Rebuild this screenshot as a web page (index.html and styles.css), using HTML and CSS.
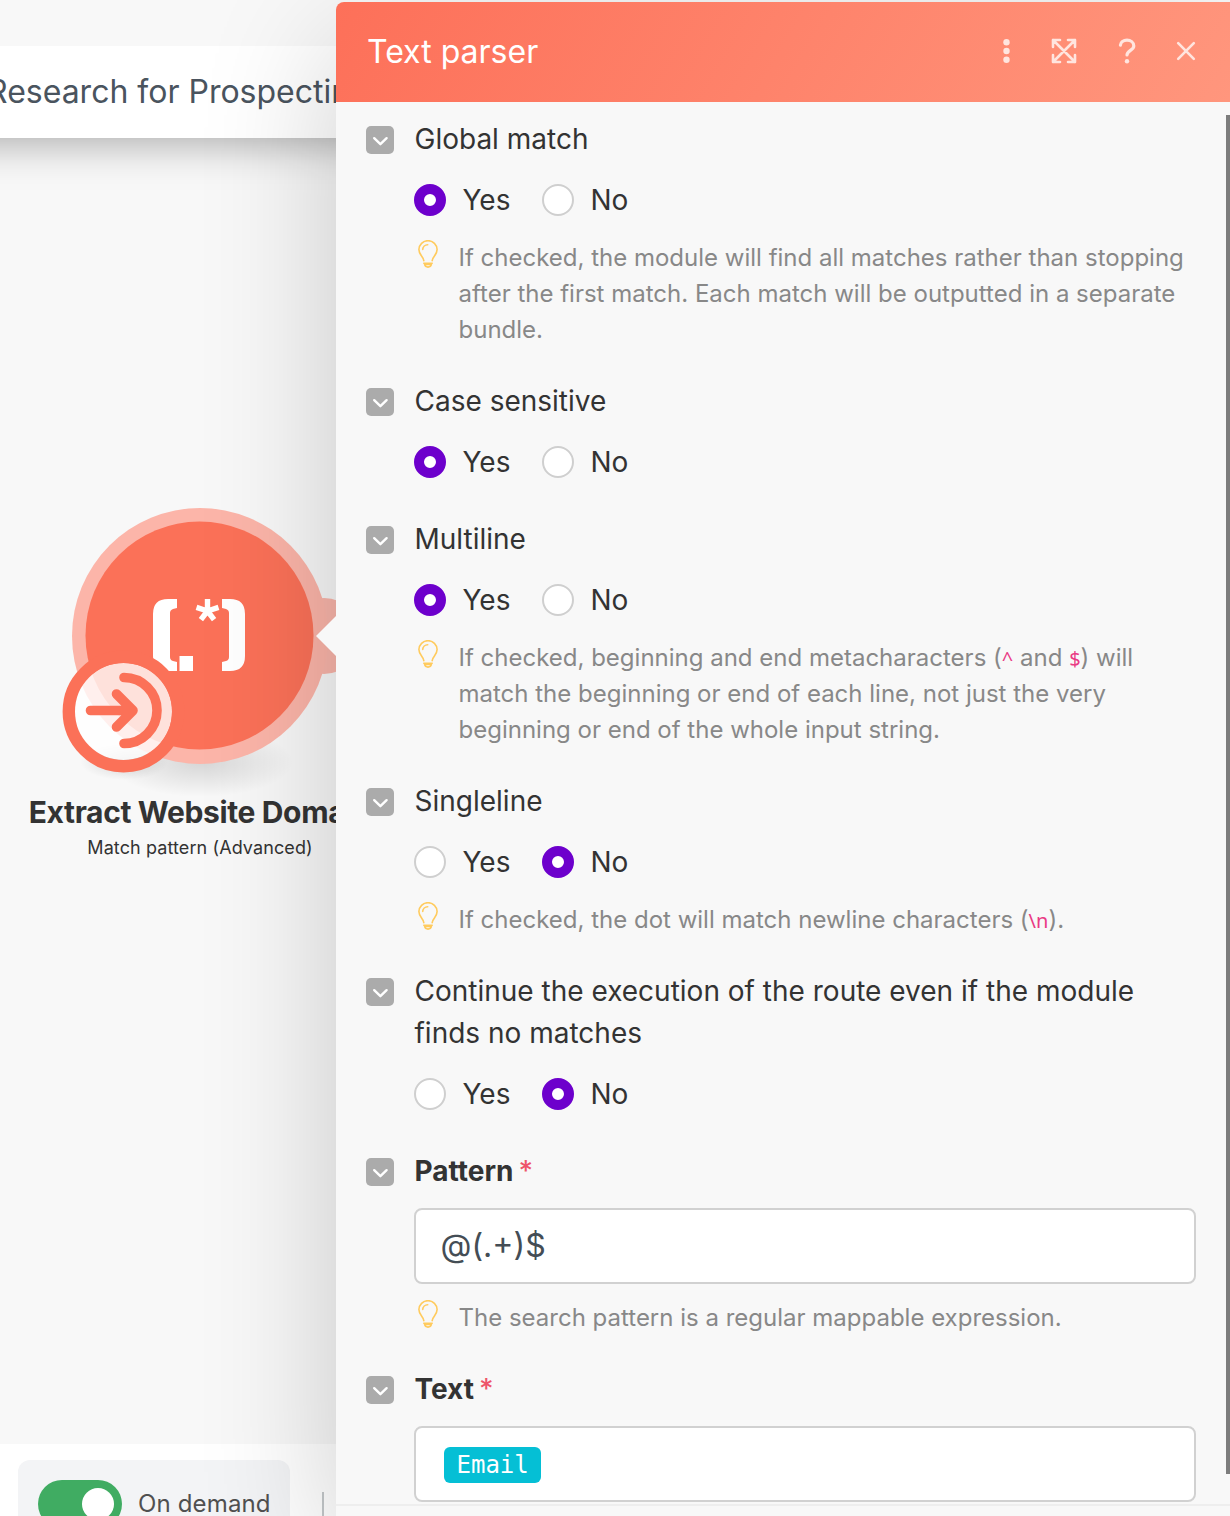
FILE: index.html
```html
<!DOCTYPE html>
<html lang="en">
<head>
    <meta charset="UTF-8">
    <title>Text parser</title>
    <link rel="stylesheet" href="styles.css">
</head>
<body>
    <!-- Shared icons -->
    <svg class="sprite">
        <symbol id="chevron" viewBox="0 0 28 28">
            <path d="M8.2 12.2l6.2 6 6.200-6" fill="none" stroke="#fff" stroke-width="2.4" stroke-linecap="round" stroke-linejoin="round"/>
        </symbol>
        <symbol id="bulb" viewBox="0 0 20 28">
            <g fill="none" stroke="#ffcb5e" stroke-width="1.6" stroke-linecap="round" stroke-linejoin="round">
                <path d="M5.800 20.600C5.300 16.600 0.900 14.800 0.900 9.600a9.100 8.900 0 0 1 18.200 0C19.100 14.800 14.700 16.600 14.200 20.600"/>
                <path d="M4.700 9.400a5 5 0 0 1 5-4.600"/>
                <path d="M5.800 23.200h8.400M6.600 24.400c.4 1.800 1.200 2.700 3.400 2.700s3-.9 3.400-2.700z"/>
            </g>
        </symbol>
    </svg>

    <div class="editor">
        <header class="topbar">
            <span class="scenario-name">Research for Prospecting</span>
        </header>

        <main class="canvas">
            <div class="module">
                <svg class="module-icon" width="340" height="310" viewBox="0 490 340 310">
                    <defs>
                        <radialGradient id="ground">
                            <stop offset="0" stop-color="#000" stop-opacity=".14"/>
                            <stop offset=".5" stop-color="#000" stop-opacity=".07"/>
                            <stop offset="1" stop-color="#000" stop-opacity="0"/>
                        </radialGradient>
                    </defs>
                    <ellipse cx="201" cy="762" rx="92" ry="35" fill="url(#ground)"/>
                    <ellipse cx="124" cy="762" rx="44" ry="18" fill="url(#ground)"/>
                    <circle cx="324" cy="636" r="38" fill="#fab6ab"/>
                    <circle cx="200" cy="636" r="128" fill="#fcb5a9"/>
                    <circle cx="199.500" cy="635.500" r="114" fill="#fb7158"/>
                    <!-- regex logo -->
                    <g fill="#fff">
                        <path d="M177 599v9l-4 1q-3 1-3 4v44q0 3 3 4l4 1v9h-9q-15 0-15-15v-42q0-15 15-15z"/>
                        <path d="M222 599v9l4 1q3 1 3 4v44q0 3-3 4l-4 1v9h8q15 0 15-15v-42q0-15-15-15z"/>
                        <path d="M179.500 656h13.500v15h-13.500z"/>
                    </g>
                    <path d="M207.500 611v-12M207.500 611l11-3.600M207.500 611l6.600 8.700M207.500 611l-6.600 8.700M207.500 611l-11-3.600" stroke="#fff" stroke-width="5.400"/>
                    <!-- trigger badge -->
                    <circle cx="123.500" cy="711.500" r="48.500" fill="#fff" fill-opacity=".79"/>
                    <circle cx="123.500" cy="711.500" r="54.700" fill="none" stroke="#fb7158" stroke-width="12.400"/>
                    <g fill="none" stroke="#fb7158" stroke-width="9.600" stroke-linecap="round" stroke-linejoin="round">
                        <path d="M90.500 710.500h42M116.500 694l16.500 16.500-16.500 16.500"/>
                        <path d="M124 677.500a33 33 0 0 1 0 66"/>
                    </g>
                </svg>
                <div class="module-name">Extract Website Domain</div>
                <div class="module-type">Match pattern (Advanced)</div>
            </div>
        </main>

        <footer class="bottombar">
            <div class="schedule">
                <span class="switch"></span>
                <span>On demand</span>
            </div>
            <span class="divider"></span>
        </footer>
    </div>

    <section class="panel">
        <header class="panel-header">
            <h1>Text parser</h1>
            <div class="panel-actions">
                <svg width="8" height="26" viewBox="0 0 8 26" fill="#ffe5df">
                    <circle cx="3.500" cy="4.200" r="3.200"/>
                    <circle cx="3.500" cy="13" r="3.200"/>
                    <circle cx="3.500" cy="21.800" r="3.200"/>
                </svg>
                <svg class="expand" width="26" height="26" viewBox="0 0 26 26">
                    <path d="M2 2l22 22M24 2L2 24M2 9V2h7M17 2h7v7M24 17v7h-7M9 24H2v-7"/>
                </svg>
                <svg class="help-btn" width="18" height="26" viewBox="0 0 18 26">
                    <path d="M2.400 7.200C2.600 4 5.500 2.200 9 2.200s6.800 2.200 6.800 5.800c0 4.200-6.800 4.600-6.800 9"/>
                    <circle cx="9" cy="23.200" r="2.200"/>
                </svg>
                <svg class="close" width="20" height="20" viewBox="0 0 20 20">
                    <path d="M2.200 2.200l15.600 15.600M17.800 2.200L2.200 17.800"/>
                </svg>
            </div>
        </header>

        <div class="panel-body">
            <div class="field">
                <svg class="toggle"><use href="#chevron"/></svg>
                <div class="field-content">
                    <div class="label">Global match</div>
                    <div class="radios">
                        <span class="radio checked"></span><span class="option">Yes</span>
                        <span class="radio"></span><span class="option">No</span>
                    </div>
                    <div class="hint">
                        <svg class="bulb"><use href="#bulb"/></svg>
                        <p>If checked, the module will find all matches rather than stopping after the first match. Each match will be outputted in a separate bundle.</p>
                    </div>
                </div>
            </div>

            <div class="field">
                <svg class="toggle"><use href="#chevron"/></svg>
                <div class="field-content">
                    <div class="label">Case sensitive</div>
                    <div class="radios">
                        <span class="radio checked"></span><span class="option">Yes</span>
                        <span class="radio"></span><span class="option">No</span>
                    </div>
                </div>
            </div>

            <div class="field">
                <svg class="toggle"><use href="#chevron"/></svg>
                <div class="field-content">
                    <div class="label">Multiline</div>
                    <div class="radios">
                        <span class="radio checked"></span><span class="option">Yes</span>
                        <span class="radio"></span><span class="option">No</span>
                    </div>
                    <div class="hint">
                        <svg class="bulb"><use href="#bulb"/></svg>
                        <p>If checked, beginning and end metacharacters (<code>^</code> and <code>$</code>) will match the beginning or end of each line, not just the very beginning or end of the whole input string.</p>
                    </div>
                </div>
            </div>

            <div class="field">
                <svg class="toggle"><use href="#chevron"/></svg>
                <div class="field-content">
                    <div class="label">Singleline</div>
                    <div class="radios">
                        <span class="radio"></span><span class="option">Yes</span>
                        <span class="radio checked"></span><span class="option">No</span>
                    </div>
                    <div class="hint">
                        <svg class="bulb"><use href="#bulb"/></svg>
                        <p>If checked, the dot will match newline characters (<code>\n</code>).</p>
                    </div>
                </div>
            </div>

            <div class="field">
                <svg class="toggle"><use href="#chevron"/></svg>
                <div class="field-content">
                    <div class="label">Continue the execution of the route even if the module finds no matches</div>
                    <div class="radios">
                        <span class="radio"></span><span class="option">Yes</span>
                        <span class="radio checked"></span><span class="option">No</span>
                    </div>
                </div>
            </div>

            <div class="field">
                <svg class="toggle"><use href="#chevron"/></svg>
                <div class="field-content">
                    <div class="label required">Pattern<span class="star">*</span></div>
                    <div class="input">@(.+)$</div>
                    <div class="hint">
                        <svg class="bulb"><use href="#bulb"/></svg>
                        <p>The search pattern is a regular mappable expression.</p>
                    </div>
                </div>
            </div>

            <div class="field">
                <svg class="toggle"><use href="#chevron"/></svg>
                <div class="field-content">
                    <div class="label required">Text<span class="star">*</span></div>
                    <div class="input"><span class="pill">Email</span></div>
                </div>
            </div>
        </div>
        <footer class="panel-footer"></footer>
        <div class="scrollbar"></div>
    </section>
</body>
</html>
```
FILE: styles.css
```css
* {
    margin: 0;
    padding: 0;
    box-sizing: border-box;
}

body {
    position: relative;
    width: 1230px;
    height: 1516px;
    overflow: hidden;
    background: #f8f8f8;
    color: #333;
    font-family: Inter, 'Noto Sans', sans-serif;
}

.sprite {
    display: none;
}

/* Scenario editor */
.editor {
    display: flex;
    flex-direction: column;
    width: 340px;
    height: 1516px;
    padding-top: 46px;
    overflow: hidden;
}

.topbar {
    display: flex;
    align-items: center;
    flex: none;
    height: 92px;
    margin: 0 -60px;
    padding: 0 0 1px 47px;
    background: #fff;
    box-shadow: 0 4px 44px rgba(0, 0, 0, 0.34);
    clip-path: inset(0 0 -60px 0);
}

.scenario-name {
    color: #4a545e;
    font-size: 32px;
    white-space: nowrap;
}

.canvas {
    flex: 1;
    padding-top: 352px;
}

.module {
    width: 400px;
    text-align: center;
    white-space: nowrap;
}

.module-icon {
    display: block;
}

.module-name {
    margin-top: -9px;
    font-size: 30px;
    font-weight: 700;
    line-height: 42px;
    letter-spacing: -0.37px;
}

.module-type {
    padding-top: 1px;
    font-size: 18px;
    line-height: 28px;
    letter-spacing: 0.1px;
}

.bottombar {
    display: flex;
    flex: none;
    height: 72px;
    padding: 16px 0 0 18px;
    background: #fff;
}

.schedule {
    display: flex;
    align-items: center;
    flex: none;
    gap: 16px;
    width: 272px;
    height: 88px;
    padding-left: 20px;
    border-radius: 12px;
    background: #f3f4f6;
    color: #505050;
    font-size: 24px;
    line-height: 28px;
    letter-spacing: 0.15px;
}

.switch {
    display: flex;
    justify-content: flex-end;
    width: 84px;
    height: 48px;
    padding: 8px;
    border-radius: 24px;
    background: #40ac62;
}

.switch::after {
    content: '';
    width: 32px;
    height: 32px;
    border-radius: 50%;
    background: #fff;
}

.divider {
    width: 2px;
    margin: 32px 0 0 32px;
    background: #c4c8ca;
}

/* Settings panel, floats over the editor */
.panel {
    position: absolute;
    top: 2px;
    left: 336px;
    display: flex;
    flex-direction: column;
    width: 894px;
    height: 1514px;
    border-radius: 8px 0 0 0;
    background: #f8f8f8;
    box-shadow: 0 40px 136px rgba(0, 0, 0, 0.2);
}

/* Arrow pointing at the module */
.panel::before {
    content: '';
    position: absolute;
    top: 614px;
    left: -20px;
    border: 20px solid transparent;
    border-left: 0;
    border-right-color: #f8f8f8;
}

.panel-header {
    display: flex;
    align-items: center;
    justify-content: space-between;
    flex: none;
    height: 100px;
    padding: 0 34px 3px 31px;
    border-radius: 8px 0 0 0;
    background: linear-gradient(120deg, #fd7059, #ff967d);
    color: #fff;
}

.panel-header h1 {
    padding-top: 2px;
    font-size: 32px;
    font-weight: 400;
}

.panel-actions {
    display: flex;
    align-items: center;
}

.expand {
    margin-left: 40px;
}

.help-btn {
    margin-left: 41px;
}

.close {
    margin-left: 40px;
}

.expand,
.help-btn,
.close {
    fill: none;
    stroke: #ffe5df;
    stroke-width: 2.6;
    stroke-linecap: round;
    stroke-linejoin: round;
}

.help-btn {
    stroke-width: 3.2;
}

.help-btn circle {
    fill: #ffe5df;
    stroke: none;
}

.panel-body {
    flex: none;
    height: 1402px;
    padding: 16px 34px 0 30px;
    overflow: hidden;
}

.field {
    display: flex;
    gap: 20px;
    padding-bottom: 32px;
}

.toggle {
    flex: none;
    width: 28px;
    height: 28px;
    margin-top: 8px;
    border-radius: 5px;
    background: #ababab;
}

.field-content {
    flex: 1;
}

.label {
    padding-left: 0.5px;
    font-size: 28px;
    line-height: 42px;
}

.label.required {
    font-weight: 700;
}

.star {
    margin-left: 5px;
    color: #ee5569;
    font-weight: 500;
}

.radios {
    display: flex;
    align-items: center;
    height: 42px;
    margin: 19px 0 3px;
    font-size: 28px;
}

.radio {
    display: flex;
    width: 32px;
    height: 32px;
    margin-right: 16.5px;
    border: 2px solid #cfcfcf;
    border-radius: 50%;
    background: #fff;
}

.radio.checked {
    border: 10px solid #6d00cc;
}

.option {
    margin-right: 31.5px;
}

.hint {
    display: flex;
    gap: 20.5px;
    margin-top: 19px;
    padding-left: 4px;
    color: #888;
    font-size: 24px;
    line-height: 36px;
}

.input + .hint {
    margin-top: 16px;
}

.bulb {
    flex: none;
    width: 20px;
    height: 28px;
}

.hint code {
    color: #ea3a84;
    font-family: 'Noto Sans', sans-serif;
    font-size: 20px;
    line-height: 1;
}

.input {
    display: flex;
    align-items: center;
    height: 76px;
    margin-top: 16px;
    padding: 0 24px 1px 24.5px;
    border: 2px solid #d1d1d1;
    border-radius: 8px;
    background: #fff;
    color: #444d55;
    font-size: 32px;
}

.pill {
    height: 36px;
    margin: 2px 0 0 3.5px;
    padding: 0 12.5px;
    border-radius: 6px;
    background: #05bfd5;
    color: #fff;
    font-family: 'DejaVu Sans Mono', monospace;
    font-size: 24px;
    line-height: 36px;
}

.panel-footer {
    flex: 1;
    border-top: 2px solid #eee;
}

.scrollbar {
    position: absolute;
    top: 113px;
    right: 0;
    width: 4px;
    height: 1359px;
    background: #7d7d7d;
}
```
